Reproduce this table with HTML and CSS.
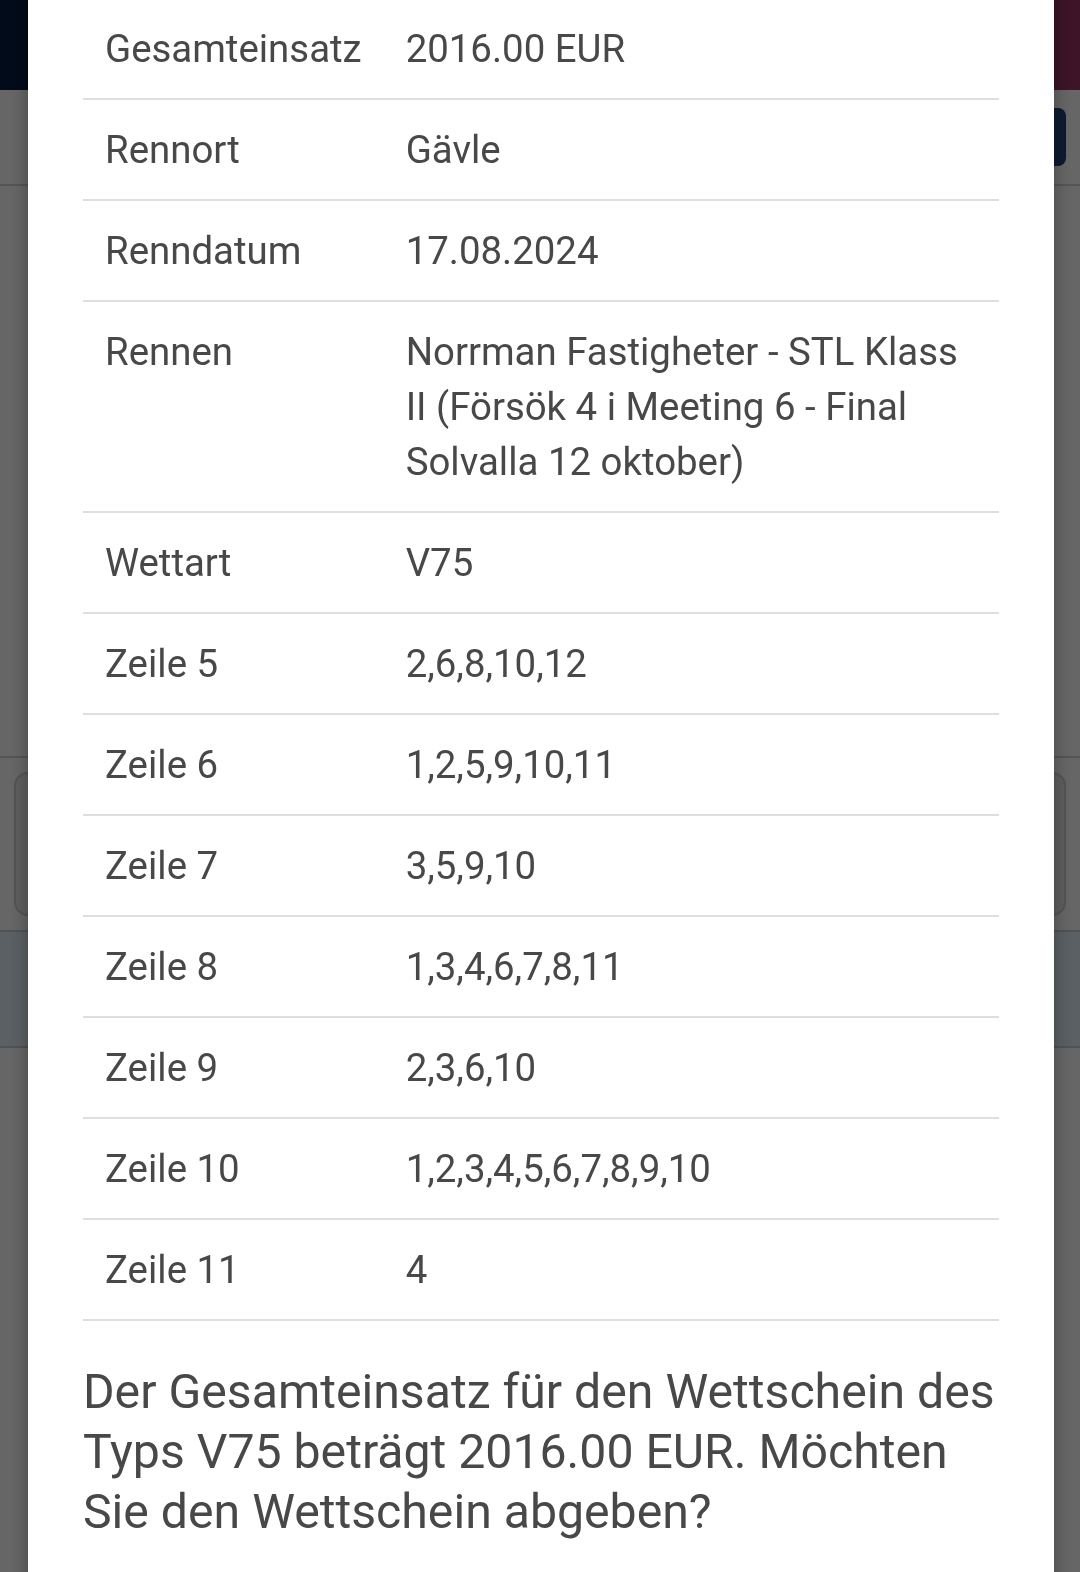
FILE: index.html
```html
<!DOCTYPE html>
<html lang="de">
<head>
<meta charset="utf-8">
<title>Wettschein abgeben</title>
<link rel="stylesheet" href="styles.css">
</head>
<body>
<div class="page">
  <header class="topbar"></header>
  <div class="toolbar">
    <div class="toolbar-btn"></div>
  </div>
  <div class="content-area"></div>
  <div class="card-row">
    <div class="card"></div>
  </div>
  <div class="band"></div>
  <div class="rest"></div>
</div>

<div class="backdrop"></div>

<div class="modal">
  <div class="modal-body">
    <table class="summary">
      <tbody>
        <tr><th>Gesamteinsatz</th><td>2016.00 EUR</td></tr>
        <tr><th>Rennort</th><td>Gävle</td></tr>
        <tr><th>Renndatum</th><td>17.08.2024</td></tr>
        <tr><th>Rennen</th><td>Norrman Fastigheter - STL Klass II (Försök 4 i Meeting 6 - Final Solvalla 12 oktober)</td></tr>
        <tr><th>Wettart</th><td>V75</td></tr>
        <tr><th>Zeile 5</th><td>2,6,8,10,12</td></tr>
        <tr><th>Zeile 6</th><td>1,2,5,9,10,11</td></tr>
        <tr><th>Zeile 7</th><td>3,5,9,10</td></tr>
        <tr><th>Zeile 8</th><td>1,3,4,6,7,8,11</td></tr>
        <tr><th>Zeile 9</th><td>2,3,6,10</td></tr>
        <tr><th>Zeile 10</th><td>1,2,3,4,5,6,7,8,9,10</td></tr>
        <tr><th>Zeile 11</th><td>4</td></tr>
      </tbody>
    </table>
    <p class="question">Der Gesamteinsatz für den Wettschein des Typs V75 beträgt 2016.00 EUR. Möchten Sie den Wettschein abgeben?</p>
  </div>
</div>
</body>
</html>
```

FILE: styles.css
```css
* { box-sizing: border-box; }

html, body {
  margin: 0;
  padding: 0;
  width: 1080px;
  height: 1572px;
  overflow: hidden;
  background: #ffffff;
  font-family: Roboto, "Liberation Sans", Arial, sans-serif;
}

/* underlying page (dimmed by backdrop) */
.page {
  display: flex;
  flex-direction: column;
  height: 1572px;
}

.topbar {
  height: 90px;
  background: linear-gradient(90deg, #051c41 0%, #3a2450 55%, #9b3264 100%);
}

.toolbar {
  height: 96px;
  display: flex;
  justify-content: flex-end;
  align-items: center;
  padding-right: 14px;
  border-bottom: 2px solid #d5d5d5;
}

.toolbar-btn {
  width: 150px;
  height: 58px;
  border-radius: 8px;
  background: #1e4178;
}

.content-area {
  height: 572px;
  border-bottom: 2px solid #d5d5d5;
}

.card-row {
  padding: 14px 14px 14px 14px;
}

.card {
  height: 144px;
  border: 2px solid #d0d0d0;
  border-radius: 14px;
  background: #ececec;
}

.band {
  height: 118px;
  background: #e1f0fa;
  border-top: 2px solid #c3d0d8;
  border-bottom: 2px solid #c3d0d8;
}

.rest {
  flex: 1;
  background: #ffffff;
}

.backdrop {
  position: fixed;
  inset: 0;
  background: rgba(0, 0, 0, 0.6);
}

/* modal dialog */
.modal {
  position: fixed;
  top: -40px;
  left: 28px;
  width: 1026px;
  height: 1700px;
  background: #ffffff;
  box-shadow: 0 0 18px rgba(0, 0, 0, 0.35);
}

.modal-body {
  padding: 39.5px 55px 0 55px;
  color: #484848;
}

.summary {
  width: 916px;
  border-collapse: collapse;
  font-size: 38.4px;
  line-height: 55.1px;
}

.summary th,
.summary td {
  text-align: left;
  font-weight: 400;
  vertical-align: top;
  padding: 21.9px 22px 21.95px 22px;
  border-bottom: 2px solid #dedede;
}

.summary th {
  width: 300px;
}

.question {
  margin: 41px 0 0 0;
  font-size: 48.2px;
  line-height: 60.3px;
  font-weight: 400;
  color: #484848;
}
```
